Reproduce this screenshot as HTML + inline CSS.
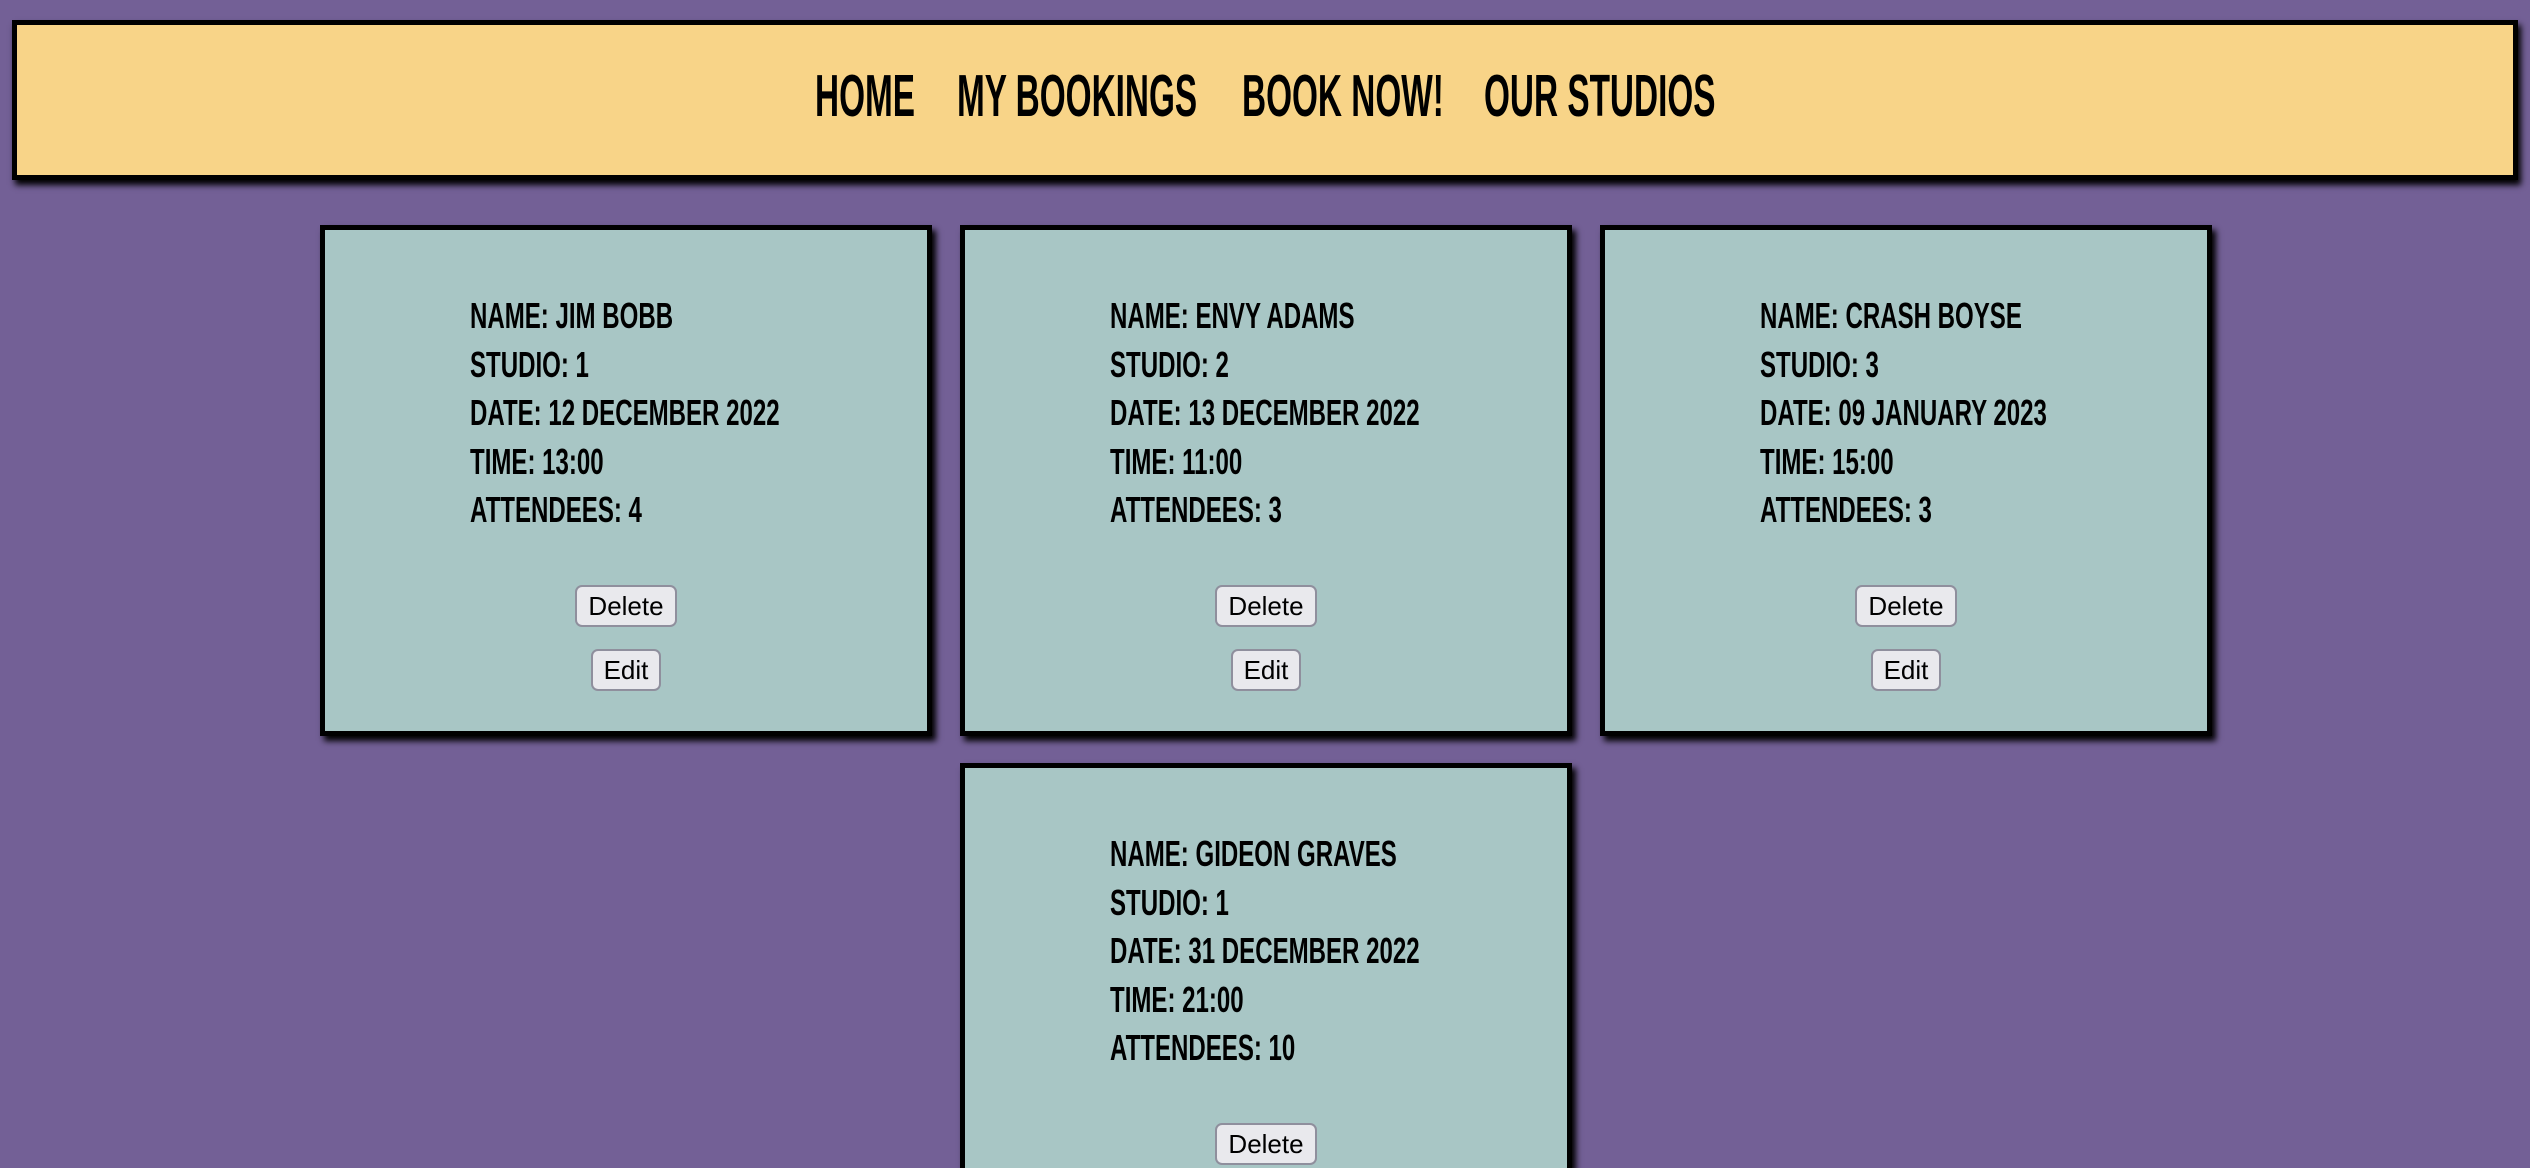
<!DOCTYPE html>
<html><head><meta charset="utf-8"><style>
*{margin:0;padding:0;box-sizing:border-box}
html,body{width:2530px;height:1168px;overflow:hidden;background:#736096;position:relative;font-family:"Liberation Sans Narrow","Liberation Sans",sans-serif}
.hdr{position:absolute;left:12px;top:20px;width:2506px;height:160px;background:#f8d488;border:5px solid #000;box-shadow:3px 5px 6px #000}
.nav{position:absolute;top:67px;font-weight:bold;font-size:59px;line-height:59px;color:#000;transform-origin:0 0;transform:scaleX(0.565);white-space:nowrap}
.card{position:absolute;width:612px;height:511px;background:#a8c6c5;border:5px solid #000;box-shadow:4px 5px 6px #000;overflow:hidden}
.info{position:absolute;top:62px;font-weight:bold;font-size:36px;line-height:48.5px;color:#000;transform-origin:0 0;transform:scaleX(0.668);white-space:nowrap}
.btn{position:absolute;left:50%;transform:translateX(-50%);height:42px;background:#e9e9ed;border:2px solid #8f8f9d;border-radius:7px;font-family:"Liberation Sans",sans-serif;font-size:26px;line-height:38px;color:#000;text-align:center}
.del{top:355px;width:102px}
.edit{top:419px;width:70px}
</style></head><body>
<div class="hdr"></div>
<div class="nav" style="left:815px">HOME</div>
<div class="nav" style="left:957px">MY BOOKINGS</div>
<div class="nav" style="left:1242px">BOOK NOW!</div>
<div class="nav" style="left:1484px">OUR STUDIOS</div>

<div class="card" style="left:320px;top:225px">
<div class="info" style="left:145px">NAME: JIM BOBB<br>STUDIO: 1<br>DATE: 12 DECEMBER 2022<br>TIME: 13:00<br>ATTENDEES: 4</div>
<div class="btn del">Delete</div><div class="btn edit">Edit</div></div>

<div class="card" style="left:960px;top:225px">
<div class="info" style="left:145px">NAME: ENVY ADAMS<br>STUDIO: 2<br>DATE: 13 DECEMBER 2022<br>TIME: 11:00<br>ATTENDEES: 3</div>
<div class="btn del">Delete</div><div class="btn edit">Edit</div></div>

<div class="card" style="left:1600px;top:225px">
<div class="info" style="left:155px">NAME: CRASH BOYSE<br>STUDIO: 3<br>DATE: 09 JANUARY 2023<br>TIME: 15:00<br>ATTENDEES: 3</div>
<div class="btn del">Delete</div><div class="btn edit">Edit</div></div>

<div class="card" style="left:960px;top:763px;height:405px;border-bottom:none">
<div class="info" style="left:145px">NAME: GIDEON GRAVES<br>STUDIO: 1<br>DATE: 31 DECEMBER 2022<br>TIME: 21:00<br>ATTENDEES: 10</div>
<div class="btn del">Delete</div></div>
</body></html>
